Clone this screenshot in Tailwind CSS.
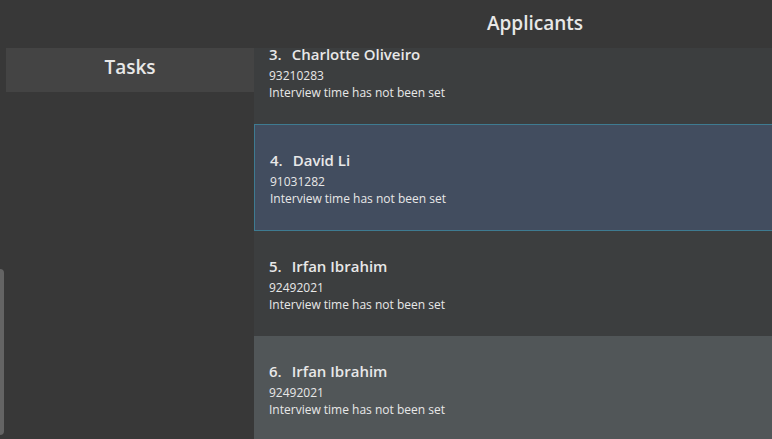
<!DOCTYPE html>
<html lang="en">
<head>
<meta charset="utf-8">
<meta name="viewport" content="width=device-width, initial-scale=1">
<title>Applicants</title>
<script src="https://cdn.jsdelivr.net/npm/@tailwindcss/browser@4"></script>
</head>
<body class="flex h-screen overflow-hidden bg-[#383838] font-['Segoe_UI','Open_Sans','Noto_Sans',sans-serif] text-[#e8e8e8]">
  <aside class="flex w-[254px] shrink-0 gap-0.5">
    <div class="flex w-1 items-end pb-1">
      <div class="h-[166px] w-full rounded-r-sm bg-[#646464]"></div>
    </div>
    <section class="flex-1 pt-12">
      <h2 class="h-11 bg-[#444444] text-center text-[19px] leading-[38px] font-semibold">Tasks</h2>
    </section>
  </aside>
  <main class="flex min-w-0 flex-1 flex-col">
    <h1 class="h-12 shrink-0 pl-11 text-center text-[19px] leading-[46px] font-semibold">Applicants</h1>
    <ol class="flex min-h-0 flex-1 flex-col overflow-hidden text-[12px] leading-[17px]">
      <li class="-mt-[29px] shrink-0 bg-[#3c3e3f] px-[15px] pt-[25px] pb-[23px]">
        <h3 class="mb-0.5 flex gap-2.5 text-[15px] leading-[21px] font-semibold"><span>3.</span><span>Charlotte Oliveiro</span></h3>
        <p>93210283</p>
        <p>Interview time has not been set</p>
      </li>
      <li class="shrink-0 border border-r-0 border-[#3e7b91] bg-[#424d5f] px-[15px] pt-[25px] pb-[23px]" aria-current="true">
        <h3 class="mb-0.5 flex gap-2.5 text-[15px] leading-[21px] font-semibold"><span>4.</span><span>David Li</span></h3>
        <p>91031282</p>
        <p>Interview time has not been set</p>
      </li>
      <li class="shrink-0 bg-[#3c3e3f] px-[15px] pt-[25px] pb-[23px]">
        <h3 class="mb-0.5 flex gap-2.5 text-[15px] leading-[21px] font-semibold"><span>5.</span><span>Irfan Ibrahim</span></h3>
        <p>92492021</p>
        <p>Interview time has not been set</p>
      </li>
      <li class="shrink-0 bg-[#515658] px-[15px] pt-[25px] pb-[23px]">
        <h3 class="mb-0.5 flex gap-2.5 text-[15px] leading-[21px] font-semibold"><span>6.</span><span>Irfan Ibrahim</span></h3>
        <p>92492021</p>
        <p>Interview time has not been set</p>
      </li>
    </ol>
  </main>
</body>
</html>
